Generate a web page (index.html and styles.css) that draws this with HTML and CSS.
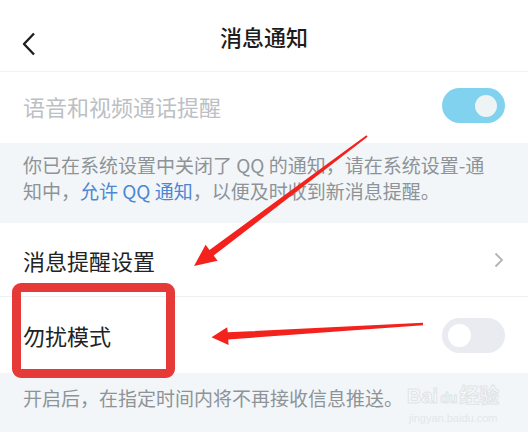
FILE: index.html
```html
<!DOCTYPE html>
<html lang="zh-CN">
<head>
    <meta charset="UTF-8">
    <title>消息通知</title>
    <link rel="stylesheet" href="styles.css">
</head>
<body>
    <div class="page">
        <div class="header">
            <svg class="back" width="14" height="24" viewBox="0 0 14 24">
                <path d="M12 1.5 L2 12 L12 22.5" fill="none" stroke="#1f1f1f" stroke-width="2.4" stroke-linejoin="round"/>
            </svg>
            <h1 class="title">消息通知</h1>
        </div>

        <div class="row row-first">
            <span class="label label-disabled">语音和视频通话提醒</span>
            <div class="switch switch-on"><div class="knob"></div></div>
        </div>

        <div class="notice">
            <div class="line">你已在系统设置中关闭了 QQ 的通知，请在系统设置-通</div>
            <div class="line line-split">
                <span>知中，</span><span class="link">允许 QQ 通知</span><span>，以便及时收到新消息提醒。</span>
            </div>
        </div>

        <div class="row row-line">
            <span class="label">消息提醒设置</span>
            <svg class="arrow-right" width="10" height="16" viewBox="0 0 10 16">
                <path d="M1.5 1.5 L8 8 L1.5 14.5" fill="none" stroke="#b4b4b4" stroke-width="1.8"/>
            </svg>
        </div>

        <div class="row row-last">
            <span class="label">勿扰模式</span>
            <div class="switch"><div class="knob"></div></div>
        </div>

        <div class="notice notice-small">
            <span class="line">开启后，在指定时间内将不再接收信息推送。</span>
        </div>

        <!-- annotations drawn over the screenshot -->
        <div class="mark-box"></div>
        <div class="watermark">
            <div class="wm-main">
                <span>Bai</span><span class="wm-du">du</span><span>经验</span>
            </div>
            <span class="wm-url">jingyan.baidu.com</span>
        </div>
        <svg class="arrows" width="528" height="435" viewBox="0 0 528 435">
            <polygon fill="#f3221d" points="366.4,135.2 209.5,250 205.6,244.8 194,266 217.6,260.8 213.7,255.6 367.6,136.8"/>
            <polygon fill="#f3221d" points="423,322.8 227.8,332.3 227.2,327.2 211.5,337.2 228.6,345 228.2,339.5 423,325.2"/>
        </svg>
    </div>
</body>
</html>
```

FILE: styles.css
```css
body {
    margin: 0;
    background: #fff;
    font-family: "Noto Sans CJK SC", "Noto Sans", sans-serif;
}

.page {
    position: relative;
    width: 528px;
    height: 435px;
    overflow: hidden;
}

.header {
    height: 72px;
    display: flex;
    align-items: center;
    justify-content: center;
    position: relative;
    border-bottom: 1px solid #f1f2f3;
    box-sizing: border-box;
}

.back {
    position: absolute;
    left: 22px;
    top: 32px;
}

.title {
    margin: 0;
    font-size: 22px;
    font-weight: 500;
    color: #1c1c1c;
}

.row {
    display: flex;
    align-items: center;
    justify-content: space-between;
    padding: 0 23px;
    height: 71px;
    box-sizing: border-box;
}

.row-first {
    padding-bottom: 4px;
}

.row-line {
    height: 74px;
    border-bottom: 1px solid #eef0f2;
}

.row-last {
    height: 76px;
}

.label {
    font-size: 22px;
    color: #222;
}

.label-disabled {
    color: #bcc0c4;
}

.switch {
    width: 63px;
    height: 35px;
    border-radius: 18px;
    background: #e9ebf1;
    display: flex;
    align-items: center;
    padding: 0 6px;
    box-sizing: border-box;
}

.switch .knob {
    width: 23px;
    height: 23px;
    border-radius: 50%;
    background: #fff;
}

.switch-on {
    background: #80d2ef;
    justify-content: flex-end;
    padding: 0 8px;
}

.switch-on .knob {
    width: 22px;
    height: 22px;
    background: #eef3f6;
}

.arrow-right {
    margin-right: 1px;
}

.notice {
    background: #f2f6f8;
    color: #8e9398;
    font-size: 19px;
    line-height: 26px;
    padding: 9px 23px 19px;
    height: 80px;
    box-sizing: border-box;
}

.line {
    white-space: nowrap;
}

.line-split {
    display: flex;
}

.notice-small {
    height: 59px;
    padding-top: 12px;
}

.link {
    color: #4d86d4;
}

.mark-box {
    position: absolute;
    left: 12px;
    top: 283px;
    width: 163px;
    height: 95px;
    border: 9px solid #e53a38;
    border-radius: 9px;
    box-sizing: border-box;
}

.watermark {
    position: absolute;
    left: 407px;
    top: 383px;
    display: flex;
    flex-direction: column;
    align-items: center;
    white-space: nowrap;
}

.wm-main {
    display: flex;
    align-items: baseline;
    gap: 2px;
    font-family: "Liberation Sans", "Noto Sans CJK SC", sans-serif;
    font-size: 20px;
    font-weight: bold;
    line-height: 26px;
    color: #f8fafb;
    -webkit-text-stroke: 1px #dfe4e7;
}

.wm-du {
    font-size: 14px;
}

.wm-url {
    font-family: "Liberation Sans", sans-serif;
    font-size: 11px;
    line-height: 14px;
    color: #e3e7ea;
}

.arrows {
    position: absolute;
    left: 0;
    top: 0;
}
```
